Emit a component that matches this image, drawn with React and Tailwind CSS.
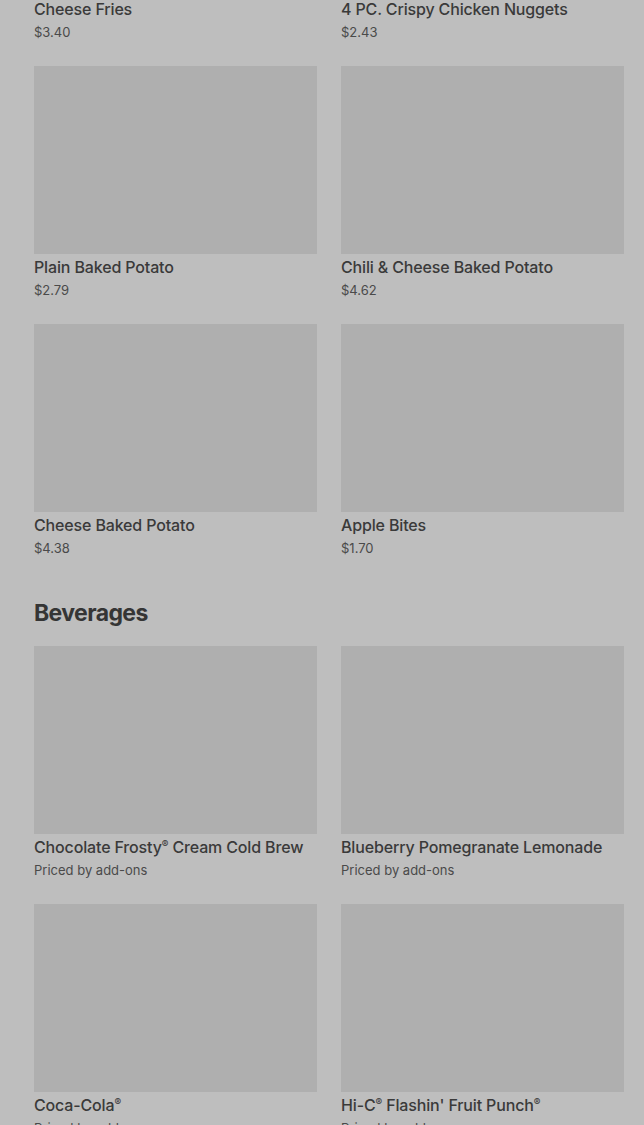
const sections = [
  {
    title: null,
    items: [
      { name: "Cheese Fries", price: "$3.40" },
      { name: "4 PC. Crispy Chicken Nuggets", price: "$2.43" },
      { name: "Plain Baked Potato", price: "$2.79" },
      { name: "Chili & Cheese Baked Potato", price: "$4.62" },
      { name: "Cheese Baked Potato", price: "$4.38" },
      { name: "Apple Bites", price: "$1.70" },
    ],
  },
  {
    title: "Beverages",
    items: [
      { name: "Chocolate Frosty® Cream Cold Brew", price: "Priced by add-ons" },
      { name: "Blueberry Pomegranate Lemonade", price: "Priced by add-ons" },
      { name: "Coca-Cola®", price: "Priced by add-ons" },
      { name: "Hi-C® Flashin' Fruit Punch®", price: "Priced by add-ons" },
    ],
  },
];

function Name({ text }) {
  const parts = text.split("®");
  return (
    <>
      {parts.map((p, i) => (
        <span key={i}>
          {p}
          {i < parts.length - 1 && (
            <span className="text-[10px] align-[5px] leading-none">®</span>
          )}
        </span>
      ))}
    </>
  );
}

function Card({ item }) {
  return (
    <div className="flex flex-col">
      <div className="h-[188px] bg-[#afafaf]" />
      <div className="mt-[2px] text-[16px] leading-[22px] font-medium tracking-[-0.15px] text-[#3a3a3a] whitespace-nowrap">
        <Name text={item.name} />
      </div>
      <div className="mt-[2px] text-[13px] leading-[20px] text-[#4a4a4a]">{item.price}</div>
    </div>
  );
}

export default function App() {
  return (
    <div
      className="min-h-[1125px] bg-[#bebebe] overflow-hidden"
      style={{ fontFamily: "Inter, 'Noto Sans', sans-serif" }}
    >
      <div className="-mt-[192px] pl-[34px] pr-[20px]">
        {sections.map((s, i) => (
          <div key={i} className={i > 0 ? "mt-[41px]" : ""}>
            {s.title && (
              <h2 className="text-[23px] leading-[28px] font-bold tracking-[-0.6px] text-[#353535] mb-[19px]">
                {s.title}
              </h2>
            )}
            <div className="grid grid-cols-2 gap-x-[24px] gap-y-[24px]">
              {s.items.map((it) => (
                <Card key={it.name} item={it} />
              ))}
            </div>
          </div>
        ))}
      </div>
    </div>
  );
}
